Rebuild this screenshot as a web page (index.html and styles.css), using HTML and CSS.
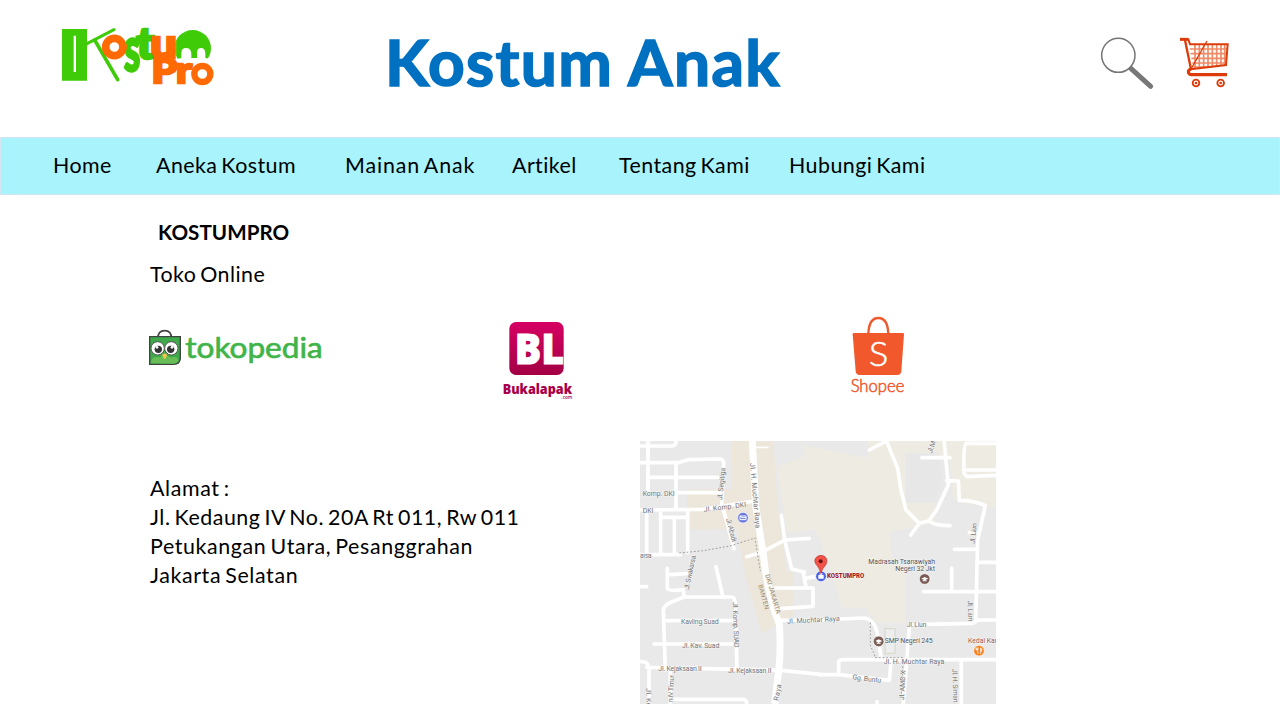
FILE: index.html
```html
<!DOCTYPE html>
<html lang="id">
<head>
<meta charset="utf-8">
<title>Kostum Anak</title>
<link rel="stylesheet" href="styles.css">
</head>
<body>
<header class="header">
  <svg class="logo" viewBox="0 0 600 270" role="img" aria-label="Kostum Pro">
    <path d="M66 57H141V212H66ZM101 77V186H108V77Z" fill="#40cb08" fill-rule="evenodd"/>
    <g stroke="#40cb08" stroke-width="9" stroke-linecap="round"><path d="M141 101L222 59"/><path d="M165 92L233 209" stroke-width="11"/></g>
    <g class="logo-letters">
      <text x="251" y="184" font-size="190" textLength="50" lengthAdjust="spacingAndGlyphs" fill="#40cb08" stroke="#40cb08" stroke-width="7">s</text>
      <circle cx="223" cy="111" r="26" fill="#fff" stroke="#ff6a05" stroke-width="23"/>
      <text x="288" y="147" font-size="132" textLength="56" lengthAdjust="spacingAndGlyphs" fill="#40cb08" stroke="#40cb08" stroke-width="7">t</text>
      <circle cx="458" cy="115" r="55" fill="#40cb08"/>
      <path d="M398 172V150L424 144V130Q424 114 438 114T454 130V144H471V130Q471 114 483 114T496 130V144L525 150V172Z" fill="#fff"/>
      <text x="331" y="145" font-size="122" textLength="80" lengthAdjust="spacingAndGlyphs" fill="#ff6a05" stroke="#ff6a05" stroke-width="8">u</text>
      <text x="335" y="220" font-size="104" textLength="76" lengthAdjust="spacingAndGlyphs" fill="#ff6a05" stroke="#ff6a05" stroke-width="8">P</text>
      <text x="408" y="220" font-size="108" textLength="48" lengthAdjust="spacingAndGlyphs" fill="#ff6a05" stroke="#ff6a05" stroke-width="7">r</text>
      <circle cx="487" cy="192" r="24" fill="#fff" stroke="#ff6a05" stroke-width="19"/>
    </g>
  </svg>
  <h1 class="title">Kostum Anak</h1>
  <div class="tools">
    <svg class="tools-icons" viewBox="0 0 510 270" fill="none">
      <path d="M149 142L212 199" stroke="#777" stroke-width="15" stroke-linecap="round"/>
      <ellipse cx="115" cy="106" rx="50" ry="51" fill="#fff" stroke="#757575" stroke-width="4.5"/>
      <g stroke="#ee8a66" stroke-width="5">
        <path d="M329 87H442M332 101H441M334 115H440M337 129H439M340 141H390M345 74V144M358 74V144M371 74V143M384 74V142M397 74V141M410 74V139M423 74V137M434 74V136"/>
      </g>
      <g stroke="#dd3c0a">
        <path d="M300 58H324" stroke-width="9"/>
        <path d="M315 60L333 148" stroke-width="7"/>
        <path d="M324 55L330 73H443L438 135L331 148" stroke-width="6"/>
        <path d="M381 63L333 147" stroke-width="4"/>
        <path d="M333 147Q324 150 325 157Q326 164 336 164" stroke-width="9"/>
        <path d="M334 164H441" stroke-width="10"/>
        <circle cx="348" cy="189" r="10" stroke-width="5.5"/><circle cx="422" cy="189" r="10" stroke-width="5.5"/>
      </g>
      <circle cx="348" cy="189" r="4" fill="#dd3c0a"/><circle cx="422" cy="189" r="4" fill="#dd3c0a"/>
    </svg>
  </div>
</header>
<nav class="nav">
  <a>Home</a><a>Aneka Kostum</a><a class="toys">Mainan Anak</a><a>Artikel</a><a>Tentang Kami</a><a>Hubungi Kami</a>
</nav>
<main class="main">
  <h2 class="shop-name">KOSTUMPRO</h2>
  <p class="subtitle">Toko Online</p>
  <div class="stores">
    <svg class="tokopedia" viewBox="54 54 528 114">
      <path d="M84 85Q83 62 104 62T124 85" fill="none" stroke="#454545" stroke-width="5"/>
      <path d="M59 80H151V146Q149 163 132 163H59Z" fill="#3da94a" stroke="#3e4540" stroke-width="4"/>
      <path d="M62 160Q65 135 88 143Q105 128 123 143Q144 135 145 154Q140 161 131 161Z" fill="#69bd56"/>
      <g fill="#fff" stroke="#555" stroke-width="3"><circle cx="83" cy="115" r="20"/><circle cx="124" cy="115" r="20"/></g>
      <circle cx="85" cy="118" r="11" fill="#333"/><circle cx="122" cy="118" r="11" fill="#333"/>
      <circle cx="81" cy="112" r="4" fill="#fff"/><circle cx="126" cy="112" r="4" fill="#fff"/>
      <path d="M96 134L104 130L112 134L106 146H102Z" fill="#f5c44a"/>
      <text x="166" y="145" font-size="88" textLength="412" lengthAdjust="spacingAndGlyphs" class="toko-text">tokopedia</text>
    </svg>
    <svg class="bukalapak" viewBox="36 33 212 237">
      <defs><linearGradient id="bl" x2="0" y2="1"><stop stop-color="#d60063"/><stop offset="1" stop-color="#a30045"/></linearGradient></defs>
      <rect x="58" y="36" width="163" height="159" rx="20" fill="url(#bl)"/>
      <text x="74" y="163" font-size="127" textLength="148" lengthAdjust="spacingAndGlyphs" class="bl-mark">BL</text>
      <text x="38" y="251" font-size="44" textLength="208" lengthAdjust="spacingAndGlyphs" class="bl-name">Bukalapak</text>
      <text x="214" y="268" font-size="17" textLength="33" lengthAdjust="spacingAndGlyphs" class="bl-com">.com</text>
    </svg>
    <svg class="shopee" viewBox="60 33 165 243">
      <path d="M115 88C116 55 127 39 145 39S174 55 175 88" fill="none" stroke="#f1582c" stroke-width="7"/>
      <path d="M72 84H218Q222 84 222 88L214 199Q213 210 202 210H89Q78 210 77 199L68 88Q68 84 72 84Z" fill="#f1582c"/>
      <text x="116" y="184" font-size="103" textLength="59" lengthAdjust="spacingAndGlyphs" class="shopee-s">S</text>
      <text x="62" y="260" font-size="50" textLength="161" lengthAdjust="spacingAndGlyphs" class="shopee-text">Shopee</text>
    </svg>
  </div>
  <div class="contact">
    <address class="address"><span class="wide">Alamat :</span><span class="street">Jl. Kedaung IV No. 20A Rt 011, Rw 011</span><span class="wide">Petukangan Utara, Pesanggrahan</span><span class="wide">Jakarta Selatan</span></address>
    <svg class="map" viewBox="0 0 1068 789">
      <rect width="1068" height="789" fill="#e9e9e9"/>
      <g transform="translate(0 -3)" fill="#ece6db">
        <path d="M275 0H400L412 190L440 396H458L460 525L365 580L314 396L290 268H142V148H275Z"/>
        <path d="M490 15L684 55L688 30H900L940 0H1068V205L968 190L938 175L930 50L800 40V187H885V250L750 275L755 350L795 396V548H702L680 503H605L575 396L525 268L440 280L412 80L490 50Z" fill="#eeebe2"/>
        <path d="M500 0H690V52L490 15Z" fill="#e9e9e9"/>
        <path d="M684 0H950L900 40H797V55H684Z" fill="#eeebe2"/>
        <path d="M797 40H895L905 120L885 187H797Z" fill="#e7e7e7"/>
      </g>
      <g class="roads" transform="translate(0 -3)">
        <path d="M0 18H98Q110 16 108 0M24 0V156M0 68H115L144 59L240 57Q252 58 251 75L245 190L282 326M108 70V210M24 112H240M114 158H245M0 210L190 208L332 185M20 210V344M62 210V344M68 232H138M103 232V344M143 210V338M0 344H120"/>
        <path d="M320 350L365 337L435 300L508 295M424 226L434 300L455 387L493 396M82 385V445Q85 455 130 449L132 471L95 486Q72 495 70 510L76 690M90 404L140 401M228 380L248 467M0 440H20M130 471H275Q285 470 286 495L291 690M78 542H285M42 612H285M20 682L425 691L540 703M0 665Q27 662 27 688V792M91 690V792M95 778H310Q321 780 320 792"/>
        <path d="M345 22H384" stroke-width="5"/>
        <path d="M400 444H519V499L420 506M490 396L498 443M495 415L525 410"/>
        <path d="M688 30L745 0M740 5L773 85L783 150L798 210L838 250L812 285M838 250L866 243L890 210L925 135L912 0M866 243Q886 257 930 257M846 53H930M920 122L955 123L958 181Q1000 180 1036 197L1013 300L1007 540M1068 10H978Q970 14 972 98L980 110L1068 106M970 90H1068M988 278H1010M943 328H1010M1010 367H1075M935 384V450M850 455H1068M790 792L808 560Q810 551 850 553L1000 550L1015 540H1068"/>
        <path d="M420 541L540 540L670 534Q700 535 711 575L724 656M540 704H596V665Q598 659 610 659H1068M596 704L748 721L753 664M964 660V792M711 785V792"/>
      </g>
      <g fill="none" stroke="#fff">
        <path d="M337 0L347 195L370 340Q383 465 418 549Q423 620 417 680L404 789" stroke-width="21"/>
        <path d="M118 336L190 329L270 315L345 291L361 390M691 545V615L704 640V650H790L784 760" stroke="#999" stroke-width="3" stroke-dasharray="5 6"/>
      </g>
      <path d="M735 563H765V637H735Z" fill="#eee" stroke="#d7dccf" stroke-width="4"/>
      <g class="map-labels">
        <text x="8" y="165" textLength="96">Komp. DKI</text><text x="8" y="215" textLength="32">DKI</text>
        <text x="0" y="350" textLength="35">arsa</text>
        <text transform="translate(192 213) rotate(-7)" textLength="128">Jl. Komp. DKI</text>
        <text transform="translate(246 178) rotate(-84)" textLength="98">Jl. Segitiga</text>
        <text transform="translate(258 234) rotate(75)" textLength="72">Jl. Abadi</text>
        <text transform="translate(330 67) rotate(85)" textLength="196">Jl. H. Muchtar Raya</text>
        <text transform="translate(146 448) rotate(-78)" textLength="105">Jl. Swakarsa</text>
        <text x="123" y="550" textLength="113">Kavling Suad</text><text x="126" y="620" textLength="112">Jl. Kav. Suad</text>
        <text x="55" y="691" textLength="130">Jl. Kejaksaan II</text><text x="264" y="697" textLength="130">Jl. Kejaksaan II</text>
        <text transform="translate(278 484) rotate(88)" textLength="136">Jl. Komp. SUAD</text>
        <text transform="translate(98 784) rotate(-87)" textLength="82">n IV Timur</text>
        <text transform="translate(18 742) rotate(88)" textLength="60">Jl. Kej</text>
        <text transform="translate(415 780) rotate(-79)" textLength="50">Raya</text>
        <text transform="translate(442 548) rotate(-3)" textLength="158">Jl. Muchtar Raya</text>
        <text transform="translate(376 402) rotate(74)" textLength="122" class="area">DKI JAKARTA</text>
        <text transform="translate(355 433) rotate(75)" textLength="76" class="area">BANTEN</text>
        <text transform="translate(876 38) rotate(-73)" textLength="38">Jl. M</text>
        <text transform="translate(1004 309) rotate(-84)" textLength="62">Jl. Liun</text>
        <text transform="translate(983 479) rotate(88)" textLength="62">Jl. Liun</text>
        <text x="800" y="558" textLength="59">Jl. Liun</text><text x="731" y="668" textLength="182">Jl. H. Muchtar Raya</text>
        <text transform="translate(637 715) rotate(7)" textLength="86">Gg. Buntu</text>
        <text transform="translate(792 778) rotate(-87)" textLength="90">Jl. AMD X</text>
        <text transform="translate(937 684) rotate(88)" textLength="101">Jl. H. Siman</text>
        <g class="place"><text x="685" y="369" textLength="200">Madrasah Tsanawiyah</text><text x="766" y="391" textLength="119">Negeri 32 Jkt</text><text x="734" y="607" textLength="144">SMP Negeri 245</text></g>
        <text x="984" y="607" textLength="92" class="food">Kedai Kan</text>
        <text x="561" y="412" textLength="112" lengthAdjust="spacingAndGlyphs" class="pin-name">KOSTUMPRO</text>
      </g>
      <g stroke="#fff" stroke-width="2">
        <circle cx="309" cy="230" r="16" fill="#6877df"/><circle cx="543" cy="406" r="16" fill="#4d62df"/>
        <circle cx="854" cy="414" r="16" fill="#795b54"/><circle cx="716" cy="601" r="16" fill="#795b54"/>
        <circle cx="1017" cy="629" r="16" fill="#f58220"/>
      </g>
      <g fill="#fff"><path d="M844 413L854 408L865 413L854 418ZM848 418H860V421H848ZM706 600L716 595L727 600L716 605ZM710 605H722V608H710Z"/><path d="M535 402H551V413H535ZM539 401V397H547V401"/></g>
      <path d="M300 225H318V236H300ZM300 225L306 230H318" fill="none" stroke="#fff" stroke-width="3"/>
      <path d="M1011 620V627Q1014 631 1014 638M1008 620V626H1014V620M1022 638V621Q1027 622 1025 630H1022" fill="none" stroke="#fff" stroke-width="2.5"/>
      <path d="M542 397Q538 379 528 370Q523 363 525 354Q531 343 543 343T560 354Q563 363 557 372Q546 383 543 397Z" fill="#f45148" stroke="#b93c35" stroke-width="2"/><circle cx="542" cy="361" r="6" fill="#601512"/>
    </svg>
  </div>
</main>
</body>
</html>
```
FILE: styles.css
```css
* { box-sizing: border-box; }
body { margin: 0; width: 1280px; height: 720px; overflow: hidden; background: #fff; color: #000; font-family: Lato, Calibri, sans-serif; font-size: 21.4px; letter-spacing: .45px; word-spacing: -2px; font-variant-ligatures: none; }
h1, h2, p { margin: 0; }
svg { display: block; letter-spacing: 0; word-spacing: 0; overflow: visible; }
.header { height: 137px; display: grid; grid-template-columns: 385px 695px 200px; align-items: start; }
.logo { width: 200px; height: 90px; margin: 10px 0 0 40px; }
.logo-letters { font-family: Lato, sans-serif; font-weight: 900; }
.title { font-size: 64px; line-height: 78px; margin-top: 23px; color: #0070c0; font-weight: 700; white-space: nowrap; letter-spacing: 1.4px; word-spacing: 0; -webkit-text-stroke: 1.6px #0070c0; }
.tools-icons { width: 170px; height: 90px; margin-top: 20px; }
.nav { height: 58px; background: #a9f3fc; border: 1px solid #d5e5f1; padding: 0 0 2px 52px; display: grid; grid-template-columns: 103px 189px 167px 107px 170px auto; align-items: center; line-height: 28px; white-space: nowrap; }
.toys { letter-spacing: .9px; }
.wide { letter-spacing: .62px; }
.street { letter-spacing: .53px; }
.main { padding-left: 150px; }
.shop-name { padding: 23px 0 0 8px; font-size: 20.6px; line-height: 28px; font-weight: 700; letter-spacing: .05px; }
.subtitle { margin-top: 14px; line-height: 28px; }
.stores { display: grid; grid-template-columns: 352px 347px auto; height: 112px; margin: 28px 0 0 -2px; align-items: start; }
.tokopedia { width: 176px; height: 38px; margin-top: 12px; }
.bukalapak { width: 70.7px; height: 79px; margin: 5px 0 0 2px; }
.shopee { width: 55px; height: 81px; margin: 0 0 0 3px; }
.toko-text { font-family: Lato, sans-serif; font-weight: 400; fill: #3fb549; stroke: #3fb549; stroke-width: 2; }
.bl-mark { font-family: "Open Sans", sans-serif; font-weight: 800; fill: #fff; stroke: #fff; stroke-width: 3; }
.bl-name { font-family: "Open Sans", sans-serif; font-weight: 800; fill: #a90049; }
.bl-com { font-family: "Open Sans", sans-serif; fill: #a90049; font-weight: 600; }
.shopee-s { font-family: Lato, sans-serif; font-weight: 300; fill: #fff; stroke: #fff; stroke-width: 1.5; }
.shopee-text { font-family: Lato, sans-serif; font-weight: 300; fill: #f1582c; stroke: #f1582c; stroke-width: 1.6; }
.contact { display: grid; grid-template-columns: 490px 356px; margin-top: 13px; align-items: start; }
.address { margin-top: 33px; font-style: normal; line-height: 29px; display: flex; flex-direction: column; white-space: nowrap; }
.map { width: 356px; height: 263px; overflow: hidden; }
.roads { fill: none; stroke: #fff; stroke-width: 11; stroke-linecap: round; stroke-linejoin: round; }
.map-labels { font-family: Roboto, sans-serif; font-size: 21px; fill: #777; stroke: #f4f4f4; stroke-width: 3; paint-order: stroke; }
.place { fill: #555; }
.area { fill: #9b8c72; font-size: 19px; stroke: #ece6db; }
.food { fill: #a65844; }
.pin-name { fill: #a51c25; font-size: 20px; font-weight: 900; }
```
